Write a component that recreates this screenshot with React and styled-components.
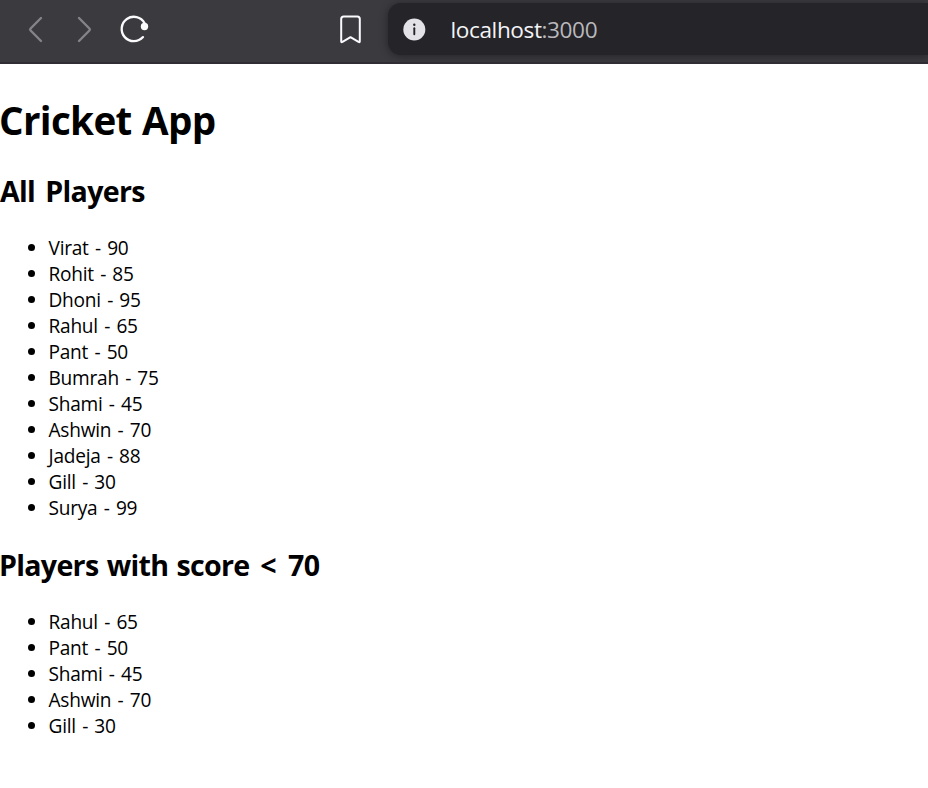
import React from "react";
import styled, { createGlobalStyle } from "styled-components";

const GlobalStyle = createGlobalStyle`
  * { box-sizing: border-box; }
  body {
    margin: 0;
    background: #fff;
    color: #000;
    font-family: "Open Sans", "Noto Sans", sans-serif;
    overflow: hidden;
  }
`;

const Toolbar = styled.header`
  display: flex;
  height: 64px;
  padding: 3px 0 0 20px;
  background: #3b3a3f;
  border-bottom: 2px solid #302d35;
  overflow: hidden;
`;

const ToolButton = styled.button`
  display: grid;
  place-items: center;
  width: ${(p) => p.$width || 49}px;
  height: 52px;
  padding: 0;
  border: 0;
  background: none;
  color: ${(p) => (p.$muted ? "#858488" : "#fbfbfe")};
  margin-left: ${(p) => p.$gap || 0}px;
  svg { display: block; }
`;

const AddressBar = styled.div`
  display: flex;
  align-items: center;
  flex: 1;
  height: 52px;
  margin-left: 13px;
  padding-left: 15px;
  border-radius: 13px 0 0 13px;
  background: #252429;
  box-shadow: 0 1px 8px rgba(0, 0, 0, 0.4);
`;

const Address = styled.span`
  margin: 2px 0 0 24.5px;
  font-size: 22.6px;
  line-height: 30px;
  letter-spacing: -0.4px;
  color: #f4f4f6;
`;

const Port = styled.span`
  color: #b9b8bc;
`;

const Title = styled.h1`
  margin: 30px 0 0 -1px;
  font-size: 38.6px;
  line-height: 52px;
  letter-spacing: -0.65px;
  word-spacing: 1px;
`;

const SectionTitle = styled.h2`
  margin: ${(p) => p.$top}px 0 0 ${(p) => p.$shift || 0}px;
  font-size: 28.6px;
  line-height: 40px;
  letter-spacing: -0.7px;
  word-spacing: ${(p) => p.$wordGap}px;
`;

const Comparison = styled.span`
  margin: 0 4px 0 2.5px;
`;

const PlayerList = styled.ul`
  margin: 24px 0 0;
  padding: 0 0 0 28px;
  list-style: none;
`;

const PlayerItem = styled.li`
  display: flex;
  align-items: center;
  height: 26px;
  font-size: 19.1px;
  line-height: 26px;
  letter-spacing: -0.25px;
  word-spacing: 1.6px;
  white-space: pre;

  &::before {
    content: "";
    width: 7px;
    height: 7px;
    margin: 0 13.5px 2px 0;
    border-radius: 50%;
    background: #000;
  }
`;

const players = [
  ["Virat", 90], ["Rohit", 85], ["Dhoni", 95], ["Rahul", 65],
  ["Pant", 50], ["Bumrah", 75], ["Shami", 45], ["Ashwin", 70],
  ["Jadeja", 88], ["Gill", 30], ["Surya", 99],
];
const lowScorers = players.filter(([, score]) => score <= 70);

const Players = ({ items }) => (
  <PlayerList>
    {items.map(([name, score]) => (
      <PlayerItem key={name}>{`${name} - ${score}`}</PlayerItem>
    ))}
  </PlayerList>
);

const stroke = {
  fill: "none",
  stroke: "currentColor",
  strokeLinecap: "round",
  strokeLinejoin: "round",
};

export default function App() {
  return (
    <>
      <GlobalStyle />
      <Toolbar>
        <ToolButton $muted $width={30} aria-label="Back">
          <svg width="30" height="52" viewBox="20 3 30 52" {...stroke} strokeWidth="2.4">
            <path d="M41 18 30.6 28.5Q29.6 29.5 30.6 30.5L41 41" />
          </svg>
        </ToolButton>
        <ToolButton $muted $width={30} $gap={20} aria-label="Forward">
          <svg width="30" height="52" viewBox="70 3 30 52" {...stroke} strokeWidth="2.4">
            <path d="M79 18 89.4 28.5Q90.4 29.5 89.4 30.5L79 41" />
          </svg>
        </ToolButton>
        <ToolButton $width={40} $gap={15} aria-label="Reload">
          <svg width="40" height="52" viewBox="115 3 40 52" {...stroke} strokeWidth="2.3">
            <path d="M144.6 23.2A12.2 12.2 0 1 0 143 37.1" />
            <circle cx="144.5" cy="26.5" r="3.7" fill="currentColor" stroke="none" />
          </svg>
        </ToolButton>
        <ToolButton $width={40} $gap={180} aria-label="Bookmark">
          <svg width="40" height="52" viewBox="335 3 40 52" {...stroke} strokeWidth="2">
            <path d="M341.2 19Q341.2 16.5 343.7 16.5H357.3Q359.8 16.5 359.8 19V41.2Q359.8 42.7 358.5 41.8L350.5 37.2 342.5 41.8Q341.2 42.7 341.2 41.2Z" />
          </svg>
        </ToolButton>
        <AddressBar>
          <svg width="23" height="23" viewBox="0 0 23 23" aria-hidden="true">
            <circle cx="11.3" cy="11.5" r="11" fill="#e3e2e7" />
            <circle cx="11.3" cy="6.7" r="1.2" fill="#252429" />
            <path d="M11.3 10.3V16.2" stroke="#252429" strokeWidth="1.9" strokeLinecap="round" />
          </svg>
          <Address>localhost<Port>:3000</Port></Address>
        </AddressBar>
      </Toolbar>
      <main>
        <Title>Cricket App</Title>
        <SectionTitle $top={25} $wordGap={3.5}>All Players</SectionTitle>
        <Players items={players} />
        <SectionTitle $top={24} $wordGap={1.5} $shift={-1}>
          Players with score <Comparison>&lt;</Comparison> 70
        </SectionTitle>
        <Players items={lowScorers} />
      </main>
    </>
  );
}
